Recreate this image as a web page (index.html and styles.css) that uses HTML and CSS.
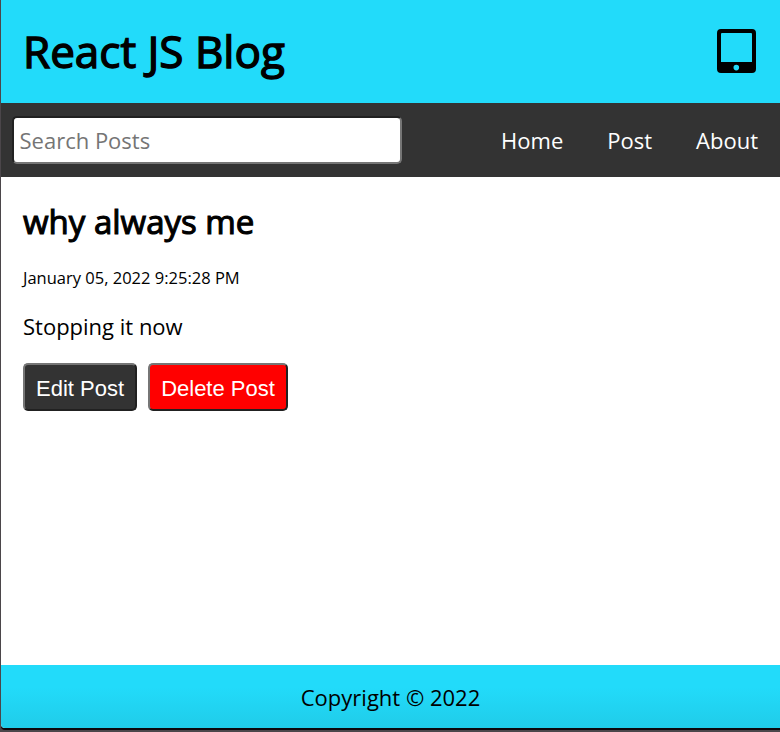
FILE: index.html
```html
<!DOCTYPE html>
<html lang="en">
<head>
<meta charset="utf-8">
<title>React JS Blog</title>
<link rel="stylesheet" href="styles.css">
</head>
<body>
<div class="app">
  <header class="header">
    <h1>React JS Blog</h1>
    <svg class="tablet" viewBox="0 0 39 44" aria-hidden="true"><path fill-rule="evenodd" d="M4 0H35Q39 0 39 4V40Q39 44 35 44H4Q0 44 0 40V4Q0 0 4 0ZM5 4Q4 4 4 5V33H35V5Q35 4 34 4ZM19.3 35.8A2.8 2.8 0 1 0 19.3 41.4A2.8 2.8 0 1 0 19.3 35.8Z"/></svg>
  </header>
  <nav class="nav">
    <input class="search" type="text" placeholder="Search Posts">
    <ul class="links"><li>Home</li><li>Post</li><li>About</li></ul>
  </nav>
  <main class="post">
    <h2>why always me</h2>
    <p class="date">January 05, 2022 9:25:28 PM</p>
    <p class="body">Stopping it now</p>
    <div class="actions">
      <button class="edit">Edit Post</button>
      <button class="delete">Delete Post</button>
    </div>
  </main>
  <footer class="footer"><p>Copyright © 2022</p></footer>
</div>
</body>
</html>
```
FILE: styles.css
```css
* { box-sizing: border-box; margin: 0; padding: 0; }
body {
  height: 732px;
  overflow: hidden;
  background: #4b464a;
  font: 22px/30px "Open Sans", sans-serif;
  color: #000;
}
.app {
  display: flex;
  flex-direction: column;
  height: 728px;
  margin-left: 1px;
  background: #fff;
  border-bottom-left-radius: 4px;
  box-shadow: 0 2px 0 #0c080c;
}
.header {
  display: flex;
  flex: none;
  align-items: center;
  justify-content: space-between;
  height: 103px;
  padding: 0 24px 1px 22px;
  background: #22dbfa;
}
h1, h2 { font-weight: 400; }
h1 {
  font-size: 44px;
  line-height: 60px;
  -webkit-text-stroke: 1.4px #000;
}
.tablet { width: 39px; height: 44px; }
.nav {
  display: flex;
  flex: none;
  align-items: center;
  justify-content: space-between;
  height: 74px;
  padding: 0 22px 0 11px;
  background: #333;
}
.search {
  width: 390px;
  height: 48px;
  padding: 0 5.5px;
  border: 2px inset #767676;
  border-radius: 5px;
  background: #fff;
  font: inherit;
}
.search::placeholder { color: #757575; }
.links {
  display: flex;
  gap: 44px;
  padding-bottom: 1px;
  color: #fff;
  list-style: none;
}
.post { flex: 1; padding: 22px; }
h2 {
  font-size: 33px;
  line-height: 45px;
  -webkit-text-stroke: 1.1px #000;
}
.date { margin-top: 23px; font-size: 16.5px; line-height: 22px; }
.body { margin-top: 22px; }
.actions { display: flex; gap: 11px; margin-top: 22px; }
button {
  height: 48px;
  padding: 3px 0 0;
  border: 2px outset #767676;
  border-radius: 5px;
  color: #fff;
  font: 22px "Liberation Sans", sans-serif;
  white-space: nowrap;
}
.edit { width: 114px; background: #333; }
.delete { width: 140px; background: #f00; }
.footer {
  display: flex;
  flex: none;
  align-items: center;
  justify-content: center;
  height: 63px;
  padding-top: 1px;
  background: linear-gradient(#22dbfa 35%, #20cce9);
  border-bottom-left-radius: 4px;
}
```
